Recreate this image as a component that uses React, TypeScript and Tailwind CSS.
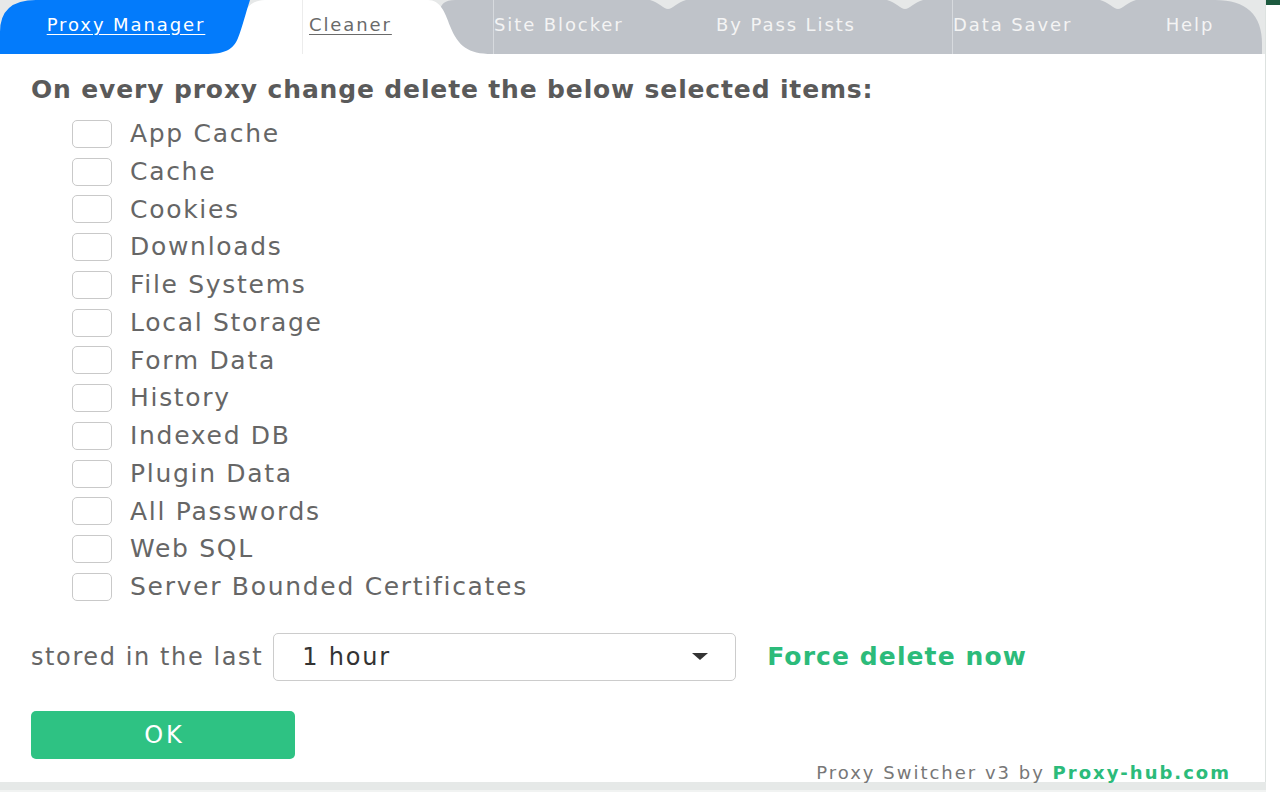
import React from "react";

const items = [
  "App Cache",
  "Cache",
  "Cookies",
  "Downloads",
  "File Systems",
  "Local Storage",
  "Form Data",
  "History",
  "Indexed DB",
  "Plugin Data",
  "All Passwords",
  "Web SQL",
  "Server Bounded Certificates",
];

function TabShapes() {
  return (
    <svg
      className="absolute inset-0"
      width="1265"
      height="54"
      viewBox="0 0 1265 54"
      aria-hidden="true"
    >
      <rect x="0" y="0" width="1265" height="54" fill="#e6e8e8" />
      <path
        d="M440 54 L440 12 Q440 0 455 0 L650 0 C658 2 664 9 668 9 C672 9 678 2 686 0 L887 0 C895 2 901 9 905 9 C909 9 915 2 923 0 L1100 0 C1108 2 1114 9 1118 9 C1122 9 1128 2 1136 0 L1215 0 Q1262 0 1262 44 L1262 54 Z"
        fill="#bfc3c9"
      />
      <path
        d="M200 54 L240 20 C246 8 252 0 265 0 L428 0 C440 0 445 12 450 26 C458 46 468 54 492 54 Z"
        fill="#ffffff"
      />
      <path
        d="M0 54 L0 32 Q0 0 36 0 L250 0 C246 12 242 28 238 38 C233 50 225 54 205 54 Z"
        fill="#037bfb"
      />
    </svg>
  );
}

function Tabs() {
  return (
    <div className="relative h-[54px] w-[1265px]">
      <TabShapes />
      <div className="relative flex h-[54px] text-[18px] tracking-[1.9px]">
        <div className="flex h-[48px] w-[252px] items-center justify-center text-white underline underline-offset-[3px]">
          Proxy Manager
        </div>
        <div className="w-[50px]" />
        <div className="flex h-[54px] w-[191px] items-start border-l border-[#ececec] pl-[6px] text-[#6a6a6a]">
          <span className="flex h-[48px] items-center underline underline-offset-[3px]">
            Cleaner
          </span>
        </div>
        <div className="flex h-[54px] w-[174px] items-start border-l border-[#d7dade] text-[#f4f4f4]">
          <span className="flex h-[48px] items-center">Site Blocker</span>
        </div>
        <div className="flex h-[48px] w-[238px] items-center justify-center text-[#f4f4f4]">
          By Pass Lists
        </div>
        <div className="w-[47px]" />
        <div className="flex h-[54px] w-[166px] items-start border-l border-[#d7dade] text-[#f4f4f4]">
          <span className="flex h-[48px] items-center">Data Saver</span>
        </div>
        <div className="flex h-[48px] w-[144px] items-center justify-center text-[#f4f4f4]">
          Help
        </div>
      </div>
    </div>
  );
}

export default function App() {
  return (
    <div className="relative h-[800px] w-[1280px] overflow-hidden bg-white font-['DejaVu_Sans',sans-serif]">
      <div className="flex">
        <div className="flex h-[782px] w-[1266px] flex-col border-r border-[#dde2e0] bg-white">
          <Tabs />
          <div className="flex flex-col pl-[31px] pt-[18px]">
            <div className="h-[36px] text-[25px] font-bold leading-[36px] tracking-[0.85px] text-[#5a5a5a]">
              On every proxy change delete the below selected items:
            </div>
            <div className="mt-[7px] flex flex-col pl-[41px]">
              {items.map((it) => (
                <div key={it} className="flex h-[37.75px] items-center">
                  <div className="h-[28px] w-[40px] rounded-[5px] border border-[#c9c9c9] bg-white" />
                  <span className="ml-[18px] text-[25px] tracking-[1.7px] text-[#666666]">
                    {it}
                  </span>
                </div>
              ))}
            </div>
            <div className="mt-[27px] flex h-[48px] items-center">
              <span className="text-[24px] tracking-[1.6px] text-[#666666]">
                stored in the last
              </span>
              <div className="ml-[10px] flex h-[48px] w-[463px] items-center justify-between rounded-[5px] border border-[#cccccc] bg-white pl-[28px] pr-[27px]">
                <span className="text-[24px] tracking-[1.8px] text-[#333333]">1 hour</span>
                <svg width="16" height="7" viewBox="0 0 16 7" aria-hidden="true">
                  <path d="M0 0 L16 0 L8 7 Z" fill="#333333" />
                </svg>
              </div>
              <span className="ml-[31px] text-[25px] font-bold tracking-[1.1px] text-[#2cbb7a]">
                Force delete now
              </span>
            </div>
            <div className="mt-[30px] flex h-[48px] w-[264px] items-center justify-center rounded-[5px] bg-[#2ec283] pl-[3px] text-[24px] tracking-[3px] text-white">
              OK
            </div>
            <div className="mt-[4px] flex h-[20px] items-center justify-end pr-[34px] text-[18px] leading-[20px] tracking-[2px]">
              <span className="text-[#777777]">Proxy Switcher v3 by&nbsp;</span>
              <span className="font-bold text-[#2cbb7a]">Proxy-hub.com</span>
            </div>
          </div>
        </div>
        <div className="flex-1">
          <div className="h-[5px] bg-[#1d5a3f]" />
        </div>
      </div>
      <div className="h-[8px] w-[1266px] bg-[#e6e9e8]" />
      <div className="h-[2px] w-[1266px] bg-[#f1f3f2]" />
    </div>
  );
}
